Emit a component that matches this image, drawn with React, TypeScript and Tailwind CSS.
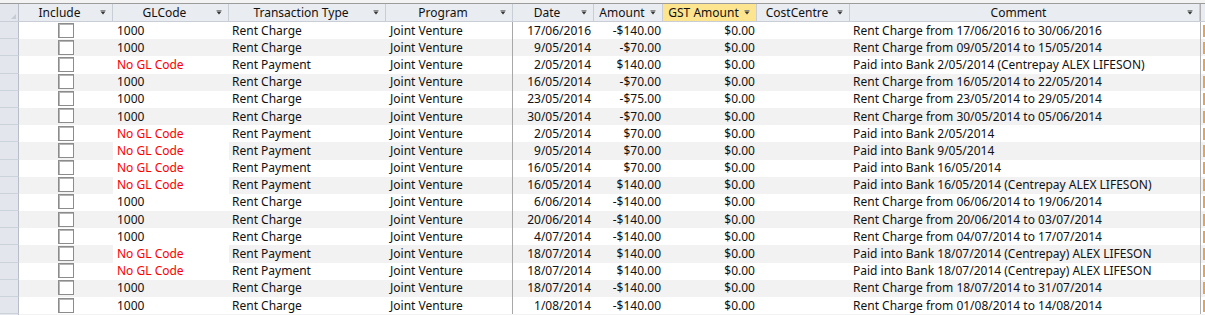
type Row = {
  gl: string;
  type: string;
  date: string;
  amount: string;
  comment: string;
};

const rows: Row[] = [
  { gl: "1000", type: "Rent Charge", date: "17/06/2016", amount: "-$140.00", comment: "Rent Charge from 17/06/2016 to 30/06/2016" },
  { gl: "1000", type: "Rent Charge", date: "9/05/2014", amount: "-$70.00", comment: "Rent Charge from 09/05/2014 to 15/05/2014" },
  { gl: "", type: "Rent Payment", date: "2/05/2014", amount: "$140.00", comment: "Paid into Bank 2/05/2014 (Centrepay ALEX LIFESON)" },
  { gl: "1000", type: "Rent Charge", date: "16/05/2014", amount: "-$70.00", comment: "Rent Charge from 16/05/2014 to 22/05/2014" },
  { gl: "1000", type: "Rent Charge", date: "23/05/2014", amount: "-$75.00", comment: "Rent Charge from 23/05/2014 to 29/05/2014" },
  { gl: "1000", type: "Rent Charge", date: "30/05/2014", amount: "-$70.00", comment: "Rent Charge from 30/05/2014 to 05/06/2014" },
  { gl: "", type: "Rent Payment", date: "2/05/2014", amount: "$70.00", comment: "Paid into Bank 2/05/2014" },
  { gl: "", type: "Rent Payment", date: "9/05/2014", amount: "$70.00", comment: "Paid into Bank 9/05/2014" },
  { gl: "", type: "Rent Payment", date: "16/05/2014", amount: "$70.00", comment: "Paid into Bank 16/05/2014" },
  { gl: "", type: "Rent Payment", date: "16/05/2014", amount: "$140.00", comment: "Paid into Bank 16/05/2014 (Centrepay ALEX LIFESON)" },
  { gl: "1000", type: "Rent Charge", date: "6/06/2014", amount: "-$140.00", comment: "Rent Charge from 06/06/2014 to 19/06/2014" },
  { gl: "1000", type: "Rent Charge", date: "20/06/2014", amount: "-$140.00", comment: "Rent Charge from 20/06/2014 to 03/07/2014" },
  { gl: "1000", type: "Rent Charge", date: "4/07/2014", amount: "-$140.00", comment: "Rent Charge from 04/07/2014 to 17/07/2014" },
  { gl: "", type: "Rent Payment", date: "18/07/2014", amount: "$140.00", comment: "Paid into Bank 18/07/2014 (Centrepay) ALEX LIFESON" },
  { gl: "", type: "Rent Payment", date: "18/07/2014", amount: "$140.00", comment: "Paid into Bank 18/07/2014 (Centrepay) ALEX LIFESON" },
  { gl: "1000", type: "Rent Charge", date: "18/07/2014", amount: "-$140.00", comment: "Rent Charge from 18/07/2014 to 31/07/2014" },
  { gl: "1000", type: "Rent Charge", date: "1/08/2014", amount: "-$140.00", comment: "Rent Charge from 01/08/2014 to 14/08/2014" },
];

function Arrow() {
  return (
    <svg width="6" height="5" viewBox="0 0 6 5" className="shrink-0">
      <rect x="0.5" y="0" width="5" height="1" fill="#8a8a8a" />
      <path d="M0.5 1.5 L5.5 1.5 L3 4.5 Z" fill="#333" />
    </svg>
  );
}

function HeaderCell({ label, w, active }: { label: string; w: string; active?: boolean }) {
  return (
    <div
      className={`${w} flex h-full items-center border-r border-[#c9ced6] pr-[6px] ${
        active ? "bg-[#fde58f]" : ""
      }`}
    >
      <span className="flex-1 text-center">{label}</span>
      <Arrow />
    </div>
  );
}

function Checkbox() {
  return <div className="h-[15px] w-[16px] border border-[#8c8c8c] bg-white shadow-[inset_1px_1px_0_#b5b5b5]" />;
}

export default function App() {
  return (
    <div
      className="h-[315px] w-[1205px] overflow-hidden bg-white text-[12px] leading-none text-[#111]"
      style={{ fontFamily: '"Noto Sans", "Open Sans", sans-serif' }}
    >
      <div className="h-[3px] bg-[#f3f3f3]" />
      <div className="flex h-[19px] border-t border-b border-t-[#9c9c9c] border-b-[#c9ced6] bg-[#e9ecf0]">
        <div className="relative h-full w-[19px] border-r border-[#b8bec7] bg-[#e3e7ed]">
          <svg width="5" height="5" viewBox="0 0 5 5" className="absolute bottom-[2px] right-[2px]">
            <path d="M5 0 L5 5 L0 5 Z" fill="#c6ccd4" />
          </svg>
        </div>
        <HeaderCell label="Include" w="w-[94px]" />
        <HeaderCell label="GLCode" w="w-[116px]" />
        <HeaderCell label="Transaction Type" w="w-[157px]" />
        <HeaderCell label="Program" w="w-[127px]" />
        <HeaderCell label="Date" w="w-[81px]" />
        <HeaderCell label="Amount" w="w-[69px]" />
        <HeaderCell label="GST Amount" w="w-[94px]" active />
        <HeaderCell label="CostCentre" w="w-[93px]" />
        <HeaderCell label="Comment" w="w-[350px]" />
        <div className="flex-1 border-l border-[#b0b0b0]" />
      </div>
      {[...rows, null].map((r, i) => {
        const alt = i % 2 === 1;
        const bg = alt ? "bg-[#f2f2f2]" : "bg-white";
        return (
          <div key={i} className={`flex h-[17.2px] items-center whitespace-nowrap ${bg}`}>
            <div className="h-full w-[19px] shrink-0 border-r border-b border-r-[#b8bec7] border-b-[#cdd3db] bg-[#e3e7ed]" />
            <div className="flex h-full w-[94px] shrink-0 items-start justify-center pt-[0.5px]">
              <Checkbox />
            </div>
            {r && (
              <>
                <div
                  className={`flex h-full w-[116px] shrink-0 items-center pl-[4px] ${
                    r.gl ? "" : "bg-white text-[#ff0000]"
                  }`}
                >
                  {r.gl || "No GL Code"}
                </div>
                <div className="w-[157px] shrink-0 pl-[3px]">{r.type}</div>
                <div className="flex h-full w-[127px] shrink-0 items-center border-r border-[#a8a8a8] pl-[4px]">
                  Joint Venture
                </div>
                <div className="w-[81px] shrink-0 pr-[3px] text-right">{r.date}</div>
                <div className="w-[69px] shrink-0 pr-[2px] text-right">{r.amount}</div>
                <div className="w-[94px] shrink-0 pr-[2px] text-right">$0.00</div>
                <div className="w-[93px] shrink-0" />
                <div className="w-[350px] shrink-0 pl-[3px]">{r.comment}</div>
                <div className="flex h-full flex-1 items-center border-l border-[#b0b0b0] pl-[2px]">
                  <div className="h-[12px] w-[3px] bg-[#e2a35a]" />
                </div>
              </>
            )}
          </div>
        );
      })}
    </div>
  );
}
